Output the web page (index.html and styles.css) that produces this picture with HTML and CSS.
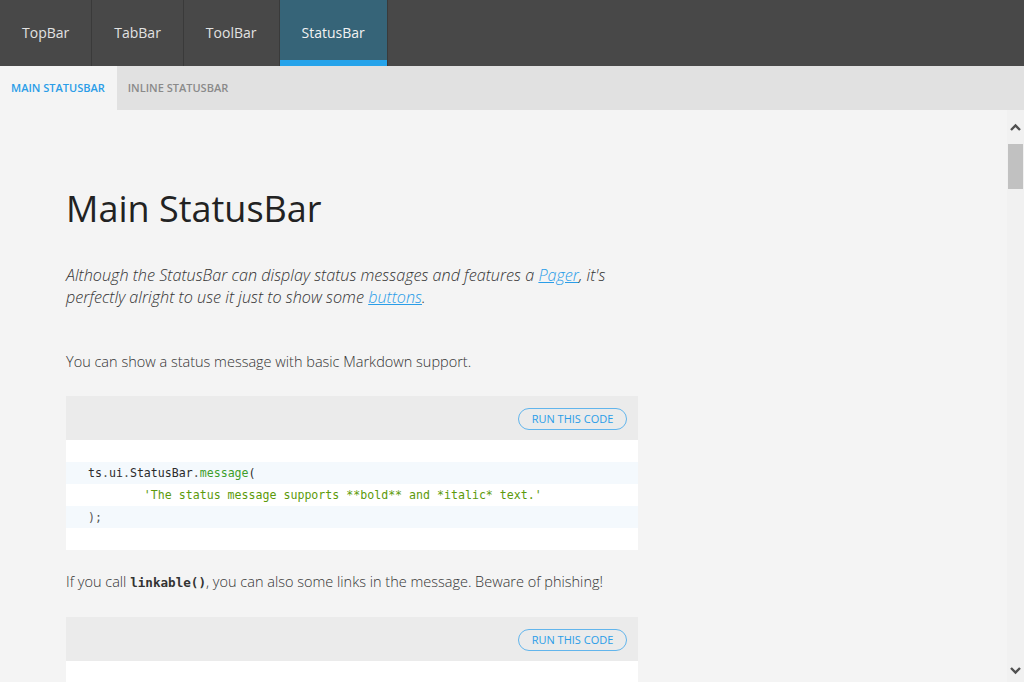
FILE: index.html
```html
<!DOCTYPE html>
<html>
<head>
<meta charset="utf-8">
<link rel="stylesheet" href="styles.css">
</head>
<body>
<div class="app">
  <nav class="topbar">
    <div class="tab">TopBar</div>
    <div class="tab">TabBar</div>
    <div class="tab">ToolBar</div>
    <div class="tab active">StatusBar</div>
  </nav>
  <nav class="subbar">
    <div class="subtab active">Main StatusBar</div>
    <div class="subtab">Inline StatusBar</div>
  </nav>
  <div class="viewport">
    <main class="scroller">
      <div class="content">
        <h1 class="title">Main StatusBar</h1>
        <p class="lead">Although the StatusBar can display status messages and features a <a href="#">Pager</a>, it's perfectly alright to use it just to show some <a href="#">buttons</a>.</p>
        <p class="text first">You can show a status message with basic Markdown support.</p>
        <section class="codebox">
          <div class="codehead"><button class="run">RUN THIS CODE</button></div>
          <div class="codebody">
            <div class="line"><span class="id">ts</span><span class="pn">.</span><span class="id">ui</span><span class="pn">.</span><span class="id">StatusBar</span><span class="pn">.</span><span class="fn">message</span><span class="id">(</span></div>
            <div class="line"><span class="str">        'The status message supports **bold** and *italic* text.'</span></div>
            <div class="line"><span class="pn">);</span></div>
          </div>
        </section>
        <p class="text second">If you call <code class="inline">linkable()</code>, you can also some links in the message. Beware of phishing!</p>
        <section class="codebox">
          <div class="codehead"><button class="run">RUN THIS CODE</button></div>
          <div class="codebody">
            <div class="line"><span class="id">ts</span><span class="pn">.</span><span class="id">ui</span><span class="pn">.</span><span class="id">StatusBar</span><span class="pn">.</span><span class="fn">linkable</span><span class="id">().</span><span class="fn">message</span><span class="id">(</span></div>
            <div class="line"><span class="str">        'Please visit [Tradeshift](http://www.tradeshift.com).'</span></div>
            <div class="line"><span class="pn">);</span></div>
          </div>
        </section>
      </div>
    </main>
    <div class="scrollbar" aria-hidden="true">
      <svg class="arrow up" width="17" height="17" viewBox="0 0 17 17"><path d="M4 11 L8.5 6.5 L13 11" fill="none" stroke="#505050" stroke-width="2.4"/></svg>
      <div class="thumb"></div>
      <div class="spacer"></div>
      <svg class="arrow down" width="17" height="17" viewBox="0 0 17 17"><path d="M4 6 L8.5 10.5 L13 6" fill="none" stroke="#505050" stroke-width="2.4"/></svg>
    </div>
  </div>
</div>
</body>
</html>
```

FILE: styles.css
```css
* { box-sizing: border-box; }
html, body { margin: 0; padding: 0; height: 100%; }
body {
  font-family: "Open Sans", "Liberation Sans", sans-serif;
  background: #f4f4f4;
  color: #333;
  overflow: hidden;
}
.app { display: flex; flex-direction: column; height: 682px; }

.topbar {
  display: flex;
  height: 66px;
  background: #484848;
  flex: none;
}
.tab {
  padding: 0 22px;
  border-right: 1px solid #3a3a3a;
  color: #e2e2e2;
  font-size: 14px;
  line-height: 66px;
  height: 66px;
}
.tab.active {
  background: #366478;
  color: #f2f2f2;
  box-shadow: inset 0 -6px 0 #25a3ea;
}

.subbar {
  display: flex;
  height: 44px;
  background: #e1e1e1;
  flex: none;
}
.subtab {
  padding: 0 11px;
  font-size: 11px;
  font-weight: 600;
  text-transform: uppercase;
  line-height: 44px;
  color: #8a8a8a;
}
.subtab.active { background: #f4f4f4; color: #2a9de8; padding-right: 12px; }

.viewport {
  flex: 1;
  position: relative;
  overflow: hidden;
}
.scroller {
  height: 100%;
  overflow: hidden;
  margin-right: 17px;
  background: #f4f4f4;
}
.content {
  padding: 74px 0 40px 66px;
  width: 638px;
}
.title {
  margin: 0;
  font-size: 36px;
  font-weight: 400;
  line-height: 49px;
  color: #222;
}
.lead {
  margin: 31px 0 0;
  font-size: 16.2px;
  font-style: italic;
  font-weight: 300;
  line-height: 22px;
  color: #333;
}
.lead a { color: #2a9de8; text-decoration: underline; }
.text {
  margin: 0;
  font-size: 14.5px;
  font-weight: 300;
  line-height: 22px;
  color: #333;
}
.text.first { margin-top: 43px; }
.text.second { margin-top: 21px; }
.inline {
  font-family: "DejaVu Sans Mono", monospace;
  font-size: 12.6px;
  font-weight: bold;
  color: #333;
}

.codebox { margin-top: 23px; background: #fff; }
.codehead {
  height: 44px;
  background: #ebebeb;
  display: flex;
  justify-content: flex-end;
  align-items: flex-start;
  padding: 12px 11px 0 0;
}
.run {
  height: 22px;
  width: 109px;
  padding: 0;
  border: 1px solid #62b5ec;
  border-radius: 11px;
  background: transparent;
  color: #2a9de8;
  font-family: "Open Sans", "Liberation Sans", sans-serif;
  font-size: 11px;
  line-height: 20px;
}
.codebody { padding: 22px 0; }
.line {
  font-family: "DejaVu Sans Mono", monospace;
  font-size: 11.6px;
  line-height: 22px;
  height: 22px;
  padding-left: 22px;
  white-space: pre;
  color: #333;
}
.line:nth-child(odd) { background: #f4f9fd; }
.id { color: #2b2b2b; }
.pn { color: #555; }
.fn { color: #3e9e2c; }
.str { color: #5c9a0a; }

.scrollbar {
  position: absolute;
  top: 0;
  right: 0;
  bottom: 0;
  width: 17px;
  background: #f1f1f1;
  display: flex;
  flex-direction: column;
  align-items: center;
}
.arrow { flex: none; display: block; }
.arrow.up { margin-top: 9px; }
.arrow.down { margin-bottom: 3px; }
.thumb {
  flex: none;
  width: 15px;
  height: 45px;
  margin-top: 8px;
  background: #c1c1c1;
}
.spacer { flex: 1; }
```
